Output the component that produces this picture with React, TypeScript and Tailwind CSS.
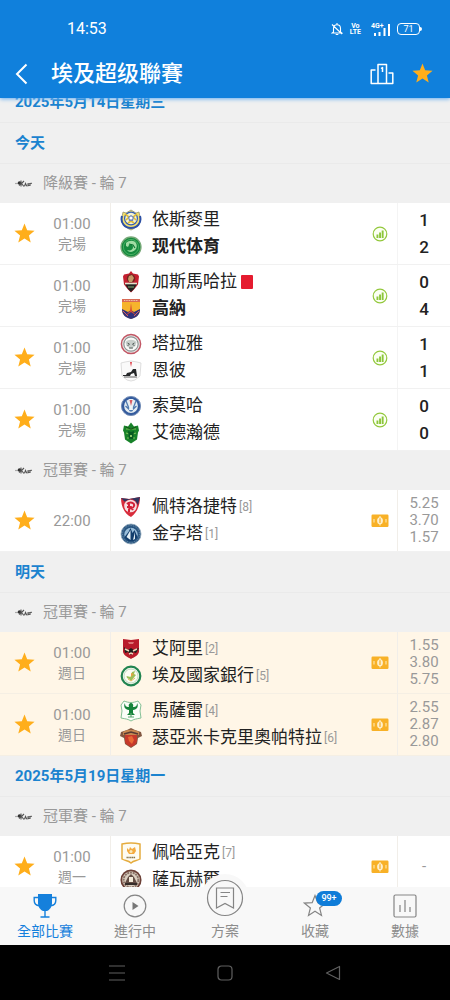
import React from "react";

type Side = { name: string; crest: React.ReactNode; bold?: boolean; rank?: number; red?: boolean };
type Match = {
  starred?: boolean;
  time: string;
  status?: string;
  home: Side;
  away: Side;
  score?: [number, number];
  odds?: string[];
  highlight?: boolean;
};
type Group = { date?: string; stage?: string; matches?: Match[] };

const STAR = "12,1.5 14.8,8.6 22.5,9.1 16.6,14 18.5,21.4 12,17.3 5.5,21.4 7.4,14 1.5,9.1 9.2,8.6";

function Crest({ children }: { children: React.ReactNode }) {
  return (
    <svg viewBox="0 0 22 22" className="size-[22px] shrink-0" aria-hidden="true">
      {children}
    </svg>
  );
}

const ismaily = (
  <Crest>
    <path d="M3 3l3 1 5-3 5 3 3-1 1 5c2 5-2 10-9 13C4 18 0 13 2 8z" fill="#f1df70" stroke="#8b8b68" strokeWidth=".7" />
    <path d="M2 7c-2 7 3 12 9 12s11-5 9-12" fill="none" stroke="#2c50a5" strokeWidth="2" />
    <circle cx="11" cy="9.5" r="6.4" fill="#f5f4d2" stroke="#345db5" strokeWidth="1.2" />
    <path d="M5 5l4 3-3 3m11-6l-4 3 3 3M8 14l3-2 3 2" fill="none" stroke="#e0bd35" strokeWidth="1.6" />
    <path d="M11 6l3 2-1 4H9L8 8z" fill="#6f86b8" />
    <circle cx="11" cy="9" r="1.6" fill="#fff" />
  </Crest>
);
const modern = (
  <Crest>
    <circle cx="11" cy="11" r="10" fill="#168a3e" stroke="#78a978" strokeWidth="1.3" />
    <circle cx="11" cy="11" r="7.6" fill="none" stroke="#4db267" strokeWidth=".9" />
    <path d="M6 7c3-3 8-3 10 0 2 4 0 8-5 9-2 0-3-1-4-2 3 1 6 0 6-3 0-2-2-3-4-2l-1 2-2-1z" fill="#a2dca4" />
    <path d="M9 8l4 1 2 3" fill="none" stroke="#0c7432" strokeWidth="1.1" />
  </Crest>
);
const gazl = (
  <Crest>
    <path d="M11 0l2 2.500 5 1 1 2-1 8-4 5-3 3-3-3-4-5-1-8 1-2 5-1z" fill="#c4202f" />
    <path d="M4.500 12h13l-3.500 6-3 3-3-3z" fill="#242321" />
    <circle cx="11" cy="7.500" r="4.200" fill="#722721" />
    <path d="M9 5l3-1 2 3-2 4H9L8 8z" fill="#c69a67" />
    <path d="M5 12.500h12" stroke="#e6e0cb" strokeWidth="1.600" />
    <path d="M8 16h6" stroke="#72976a" strokeWidth="1.200" />
  </Crest>
);
const gouna = (
  <Crest>
    <path d="M2 3h18v9c0 5-4 7-9 9-5-2-9-4-9-9z" fill="#f6b42c" />
    <path d="M2 1h18v3H2z" fill="#d96a55" />
    <path d="M4 2.500h14" stroke="#f4d8bd" strokeWidth=".9" strokeDasharray="1 .7" />
    <path d="M2 11l6 3 3-2 3 2 6-3c0 6-4 9-9 10-5-1-9-4-9-10z" fill="#30327b" />
    <path d="M11 5l1 8 5 5-6-4-6 4 5-5z" fill="#d94c32" />
    <path d="M3 13l5 5m11-5l-5 5" stroke="#d66062" strokeWidth="1" />
  </Crest>
);
const talaea = (
  <Crest>
    <circle cx="11" cy="11" r="9.600" fill="#e8e9e7" stroke="#c25765" strokeWidth="1.500" />
    <circle cx="11" cy="11" r="7.200" fill="#f9faf8" stroke="#8e9494" strokeWidth="1.200" />
    <path d="M5.500 9c3-3 8-3 11 0l-1 4-4.500 3-4.500-3z" fill="#c8cfcb" />
    <path d="M7.500 10l2 1-2 2m7-3l-2 1 2 2M9 15h4" fill="none" stroke="#58625f" strokeWidth="1" />
  </Crest>
);
const enppi = (
  <Crest>
    <path d="M1 3l4-1 6-1 6 1 4 1-1 13-5 4-4 1-4-1-5-4z" fill="#fafafa" stroke="#d5d5d5" strokeWidth=".8" />
    <path d="M10 2h2l-1 5z" fill="#e14650" />
    <path d="M3 15h3l1-2 4-1 2-3h3l1 7h-2l-1-3-3 1-1 2H3z" fill="#252729" />
    <path d="M4 17h13" stroke="#777" strokeWidth="1.200" />
  </Crest>
);
const smouha = (
  <Crest>
    <circle cx="11" cy="11" r="9.600" fill="#345b9d" stroke="#758fb8" strokeWidth="1" />
    <circle cx="11" cy="11" r="6.900" fill="#e5edf2" />
    <path d="M6 6l4 10m6-10l-4 10M5.500 11l5.500 5 5.500-5" fill="none" stroke="#517bb0" strokeWidth="1.300" />
    <path d="M9 4h4l-1 5 1 6h-4l1-6z" fill="#eef4f6" />
    <path d="M9.500 5h3L11 11z" fill="#d95b61" />
  </Crest>
);
const ittihad = (
  <Crest>
    <path d="M4 3.500l4 1 3-4 3 4 4-1 1 5-1 2-1 7-6 4-6-4-1-7-1-2z" fill="#178229" />
    <path d="M6 7h10M6 11l3 1m4 0l3-1M7 16h8" stroke="#7ac057" strokeWidth="1.200" />
    <path d="M8 9l3 1 3-1-1 8h-4z" fill="#075b22" />
    <path d="M10 13h2v2h-2z" fill="#8ac866" />
    <path d="M6 5l5 2 5-2" fill="none" stroke="#165719" strokeWidth="1.200" />
  </Crest>
);
const petrojet = (
  <Crest>
    <path d="M1 2l8 1 11-2c0 7-2 15-9 20C5 18 1 11 1 2z" fill="#d82c3b" />
    <path d="M1 2l8 1 11-2-2 8c-3-7-9-7-13-3z" fill="#30355f" />
    <circle cx="10.500" cy="10" r="6.300" fill="#f5dfe1" />
    <path d="M7 8c3-3 8-1 7 2s-4 3-6 1m1 5V7m-2 4h4l2 3" fill="none" stroke="#d31f36" strokeWidth="2" />
  </Crest>
);
const pyramids = (
  <Crest>
    <circle cx="11" cy="11" r="10" fill="#28547f" stroke="#8ba4b9" strokeWidth=".8" />
    <circle cx="11" cy="11" r="8.400" fill="none" stroke="#8aa9c1" strokeWidth=".7" strokeDasharray="1 .8" />
    <circle cx="11" cy="11.500" r="6.700" fill="#99bdd9" />
    <path d="M4.500 14l4-5 2-4 2 5 2-3 3 7c-2 6-11 6-13 0z" fill="#123e6d" />
    <path d="M10.500 7v10l-4-3zM15 9v7l-2 1z" fill="#e4eff5" />
  </Crest>
);
const ahly = (
  <Crest>
    <path d="M3 1l8 1 8-1v13c-1 4-5 5-8 7-3-2-7-3-8-7z" fill="#b91c2b" />
    <path d="M8 4h6l-1 2H9z" fill="#de7375" />
    <path d="M4 9l4 3 3-2 3 2 5-2-3 5-3-1-2 3-3-3-3 1z" fill="#1e1c1b" />
    <path d="M5 11l4 2m4 0l4-2m-8 5l2-1 2 1" fill="none" stroke="#ead8ba" strokeWidth="1.400" />
  </Crest>
);
const bank = (
  <Crest>
    <circle cx="11" cy="11" r="9.300" fill="#fbfcf3" stroke="#218450" strokeWidth="2.200" />
    <circle cx="11" cy="11" r="7" fill="none" stroke="#a5c9ac" strokeWidth=".7" />
    <path d="M6.500 11l4 1 1.500-5 3-1-1 3 2 1-5 6-2-2-2-1z" fill="#9bbf58" />
    <path d="M11 8l3 1-3 3z" fill="#e4a344" />
    <path d="M8 14l3 2 4-3" fill="none" stroke="#e1b95e" strokeWidth="1" />
  </Crest>
);
const masry = (
  <Crest>
    <path d="M4 1c5 2 9 2 14 0l3 4-1 6 1 7c-5 1-7 1-10 3-3-2-5-2-10-3l1-7-1-6z" fill="#fbfef9" stroke="#77b98b" strokeWidth=".9" />
    <path d="M5 3c-2 3 0 7 4 7v3l-2 2h8l-2-2v-3c4 0 6-4 4-7 0 3-1 4-4 4 1-3-1-4-2-4S8 4 9 7C6 7 5 6 5 3z" fill="#16833a" />
    <path d="M8 17h6m-3-4v4" stroke="#5ca571" strokeWidth="1.200" />
  </Crest>
);
const cleopatra = (
  <Crest>
    <path d="M1 5l6-2 4-2 4 2 6 2 1 4-4 2-1 6-6 4-6-4-1-6-4-2z" fill="#815641" />
    <path d="M3 5c4-3 12-3 16 0v3H3z" fill="#c68750" />
    <path d="M5 8h12v6c-1 4-4 5-6 6-3-2-6-3-6-6z" fill="#c6392b" />
    <path d="M8 10l4-1 2 4-2 4-3-3z" fill="#e96935" />
    <path d="M4 7l7-2 7 2" stroke="#563a34" fill="none" strokeWidth="1.500" />
  </Crest>
);
const pharco = (
  <Crest>
    <path d="M2 2c5-1 13-1 18 0v15c-3 2-6 1-9 4-3-3-6-2-9-4z" fill="#fefcf2" stroke="#e5ac3f" strokeWidth="1.500" />
    <path d="M7 6l2 2 1-3 2 2 3-2 1 4-2 3H9L7 9z" fill="#f4ab40" />
    <circle cx="11" cy="9.500" r="1.500" fill="#fbebbd" />
    <path d="M6.500 15.500h9" stroke="#88764c" strokeWidth="1.500" strokeDasharray="1.4 .4" />
  </Crest>
);
const zed = (
  <Crest>
    <circle cx="11" cy="11" r="9.700" fill="#dbcfc0" stroke="#6c4037" strokeWidth="1.700" />
    <circle cx="11" cy="11" r="7.400" fill="none" stroke="#8c7469" strokeWidth="2" strokeDasharray="2 .8" />
    <path d="M5 14l3-6 3-3 3 3 3 6z" fill="#634c44" />
    <path d="M9 8h4v5H9z" fill="#f2ead9" />
    <path d="M5 15h12" stroke="#352c29" strokeWidth="2" />
  </Crest>
);

const fixtures: Group[] = [
  {
    date: "今天",
    stage: "降級賽 - 輪 7",
    matches: [
      { starred: true, time: "01:00", status: "完場", home: { name: "依斯麥里", crest: ismaily }, away: { name: "现代体育", crest: modern, bold: true }, score: [1, 2] },
      { time: "01:00", status: "完場", home: { name: "加斯馬哈拉", crest: gazl, red: true }, away: { name: "高納", crest: gouna, bold: true }, score: [0, 4] },
      { starred: true, time: "01:00", status: "完場", home: { name: "塔拉雅", crest: talaea }, away: { name: "恩彼", crest: enppi }, score: [1, 1] },
      { starred: true, time: "01:00", status: "完場", home: { name: "索莫哈", crest: smouha }, away: { name: "艾德瀚德", crest: ittihad }, score: [0, 0] },
    ],
  },
  {
    stage: "冠軍賽 - 輪 7",
    matches: [
      { starred: true, time: "22:00", home: { name: "佩特洛捷特", crest: petrojet, rank: 8 }, away: { name: "金字塔", crest: pyramids, rank: 1 }, odds: ["5.25", "3.70", "1.57"] },
    ],
  },
  {
    date: "明天",
    stage: "冠軍賽 - 輪 7",
    matches: [
      { starred: true, highlight: true, time: "01:00", status: "週日", home: { name: "艾阿里", crest: ahly, rank: 2 }, away: { name: "埃及國家銀行", crest: bank, rank: 5 }, odds: ["1.55", "3.80", "5.75"] },
      { starred: true, highlight: true, time: "01:00", status: "週日", home: { name: "馬薩雷", crest: masry, rank: 4 }, away: { name: "瑟亞米卡克里奧帕特拉", crest: cleopatra, rank: 6 }, odds: ["2.55", "2.87", "2.80"] },
    ],
  },
  {
    date: "2025年5月19日星期一",
    stage: "冠軍賽 - 輪 7",
    matches: [
      { starred: true, time: "01:00", status: "週一", home: { name: "佩哈亞克", crest: pharco, rank: 7 }, away: { name: "薩瓦赫爾", crest: zed }, odds: ["-"] },
    ],
  },
];

function Star({ className }: { className: string }) {
  return (
    <svg viewBox="0 0 24 24" className={className} aria-hidden="true">
      <polygon points={STAR} fill="#ffae1b" />
    </svg>
  );
}

function LeagueMark() {
  return (
    <svg viewBox="0 0 18 10" className="h-[10px] w-[18px]" aria-hidden="true">
      <path d="M0 4.500h3" stroke="#aaa" strokeWidth="1.200" />
      <circle cx="4.500" cy="4" r="1.800" fill="#333" />
      <path d="M4 6.500l1.500-1.500M6 1.500v6M9 2L6.500 4.500 9 7.500M9.500 7.200l1-2.700 1.300 2.700M12.300 7l1.500-.5-1-1.500 1.500-.5M15 7V4.500l2-.3" fill="none" stroke="#555" strokeWidth="1.100" />
    </svg>
  );
}

function StatsMark() {
  return (
    <svg viewBox="0 0 16 16" className="size-4" aria-hidden="true">
      <circle cx="8" cy="8" r="6.800" fill="#fbfff3" stroke="#93c83d" strokeWidth="1.200" />
      <path d="M4.500 8.500h1.900V12H4.500zM7.100 6.500H9V12H7.100zM9.700 4.500h1.900V12H9.700z" fill="#8cc63a" />
    </svg>
  );
}

function OddsMark() {
  return (
    <svg viewBox="0 0 18 14" className="h-[14px] w-[18px]" aria-hidden="true">
      <rect x=".5" y=".5" width="17" height="12.500" rx="1.200" fill="#f8b127" />
      <ellipse cx="9" cy="6.800" rx="2.900" ry="3.500" fill="#fff0cc" />
      <path d="M9 2v9.500" stroke="#fff0cc" strokeWidth="1.100" />
      <path d="M9 4.300v4.800" stroke="#f2a716" strokeWidth="1.100" />
      <path d="M3 5v3.500M15 5v3.500" stroke="#ffe4a6" strokeWidth="1.200" />
    </svg>
  );
}

function Team({ side }: { side: Side }) {
  return (
    <div className="flex h-[27px] items-center">
      {side.crest}
      <span className={side.bold ? "ml-[10px] whitespace-nowrap text-[17px] font-bold text-[#222]" : "ml-[10px] whitespace-nowrap text-[17px] text-[#222]"}>{side.name}</span>
      {side.rank && <span className="ml-[2px] text-[12px] text-[#999]">[{side.rank}]</span>}
      {side.red && <span className="ml-1 h-[14px] w-3 rounded-[1px] bg-[#e51b2f]" aria-label="紅牌" />}
    </div>
  );
}

function MatchRow({ match }: { match: Match }) {
  return (
    <li className={match.highlight ? "flex h-[62px] border-b border-[#f5efe4] bg-[#fff6e7]" : "flex h-[62px] border-b border-[#f1f1f1] bg-white"}>
      <button className="flex w-12 shrink-0 items-center justify-center" aria-label="收藏比賽">
        {match.starred && <Star className="size-[23px]" />}
      </button>
      <div className="flex w-[63px] shrink-0 flex-col items-center justify-center border-r border-[#f1eee9] pr-[14px] text-[15px] leading-5 text-[#999]">
        <span>{match.time}</span>
        {match.status && <span className="text-[14px]">{match.status}</span>}
      </div>
      <div className="flex min-w-0 flex-1 flex-col justify-center pl-[9px]">
        <Team side={match.home} />
        <Team side={match.away} />
      </div>
      <div className="flex w-[35px] shrink-0 items-center justify-center">{match.score ? <StatsMark /> : <OddsMark />}</div>
      {match.score ? (
        <div className="flex w-[53px] shrink-0 flex-col items-center justify-center border-l border-[#f4f4f4] text-[17px] leading-[27px] font-medium text-[#222]">
          <span>{match.score[0]}</span>
          <span>{match.score[1]}</span>
        </div>
      ) : (
        <div className="flex w-[53px] shrink-0 flex-col items-center justify-center border-l border-[#f1eee9] text-[15px] leading-[17px] text-[#999]">
          {match.odds?.map((o) => <span key={o}>{o}</span>)}
        </div>
      )}
    </li>
  );
}

function DateHeading({ children }: { children: React.ReactNode }) {
  return <h2 className="flex h-[41px] items-center border-b border-[#eaeaea] px-[15px] text-[15px] font-bold text-[#1b83cf]">{children}</h2>;
}

function StatusBar() {
  return (
    <div className="flex h-[49px] items-center justify-between pt-[9px] pr-7 pl-[67px]">
      <span className="text-[16px]">14:53</span>
      <div className="flex items-center">
        <svg viewBox="0 0 12 14" className="mr-[7px] h-[14px] w-3" fill="none" stroke="currentColor" strokeWidth="1.100" aria-hidden="true">
          <path d="M2.500 10V6.500C2.500 4 4 2.700 6 2.700S9.500 4 9.500 6.500V10l1.200 1H1.300zM6 1v1.700M4.700 12.500h2.600M1 2.500l10 9.500" />
        </svg>
        <span className="mr-[10px] flex flex-col items-center text-[7px] leading-[6px] font-bold">
          <span>Vo</span>
          <span>LTE</span>
        </span>
        <span className="relative h-[13px] w-5">
          <span className="absolute top-0 left-0 text-[7px] leading-[7px] font-bold">4G+</span>
          <svg viewBox="0 0 20 13" className="size-full" fill="currentColor" aria-hidden="true">
            <path d="M3 10h2v3H3zM7.500 9h2v4h-2zM12.500 5h2v8h-2zM17 1h2v12h-2z" />
          </svg>
        </span>
        <span className="ml-[6px] flex h-3 w-[23px] items-center justify-center rounded-[4px] border border-white text-[9px] leading-none">71</span>
        <span className="h-1 w-[2px] rounded-r bg-white" />
      </div>
    </div>
  );
}

const tabs = [
  {
    label: "全部比賽",
    icon: (
      <svg viewBox="0 0 24 26" className="h-[26px] w-6" aria-hidden="true">
        <path d="M5 1h14v8.500c0 4.500-2 7-5 8.500h-4c-3-1.500-5-4-5-8.500z" fill="#1580dc" />
        <path d="M5.500 4.500H1.200v3c0 3 2 5 5.300 5.200M18.500 4.500h4.300v3c0 3-2 5-5.300 5.200M12 17v7M7.500 24h9" fill="none" stroke="#1580dc" strokeWidth="1.400" />
      </svg>
    ),
  },
  {
    label: "進行中",
    icon: (
      <svg viewBox="0 0 24 24" className="size-6" aria-hidden="true">
        <circle cx="12" cy="12" r="10.800" fill="none" stroke="#858585" strokeWidth="1.200" />
        <path d="M9.500 8l6 4-6 4z" fill="#777" />
      </svg>
    ),
  },
  {
    label: "方案",
    icon: (
      <svg viewBox="0 0 48 48" className="size-12" fill="none" stroke="#858585" strokeWidth="1.200" aria-hidden="true">
        <circle cx="24" cy="24" r="24" fill="#f8f8f8" stroke="none" />
        <circle cx="24" cy="24" r="17.500" />
        <path d="M15.500 14h17v20L24 29.500 15.500 34zM19.500 18.500h9.500M19.500 22.500h7" />
      </svg>
    ),
  },
  {
    label: "收藏",
    badge: "99+",
    icon: (
      <svg viewBox="0 0 24 24" className="size-6" aria-hidden="true">
        <polygon points={STAR} fill="none" stroke="#858585" strokeWidth="1.200" />
      </svg>
    ),
  },
  {
    label: "數據",
    icon: (
      <svg viewBox="0 0 24 24" className="size-6" fill="none" stroke="#858585" strokeWidth="1.200" aria-hidden="true">
        <rect x="1" y="1" width="22" height="22" rx="1.500" />
        <path d="M7 11v7M12 6v12M17 13v5" />
      </svg>
    ),
  },
];

export default function App() {
  return (
    <div lang="zh-Hant" className="flex h-screen flex-col bg-[#f0f0f0] font-[Roboto,'Noto_Sans_CJK_TC',sans-serif]">
      <header className="relative z-10 h-[98px] shrink-0 bg-[#1080dc] text-white shadow-[0_1px_4px_#66aef0]">
        <StatusBar />
        <div className="flex h-[49px] items-center pr-4 pl-[13px]">
          <button aria-label="返回" className="flex w-[38px] items-center">
            <svg viewBox="0 0 16 22" className="h-[22px] w-4" fill="none" stroke="currentColor" strokeWidth="2" aria-hidden="true">
              <path d="M13.500 1.500L4 11l9.500 9.500" />
            </svg>
          </button>
          <h1 className="flex-1 text-[22px] leading-[49px] font-medium">埃及超级聯賽</h1>
          <button aria-label="排名" className="mr-[17px]">
            <svg viewBox="0 0 24 22" className="h-[22px] w-6" fill="none" stroke="currentColor" strokeWidth="1.500" strokeLinejoin="round" aria-hidden="true">
              <path d="M8 20.500V1.500h8.500v19M5.500 7H1.200v13.500h21.600V10h-4.300M11 5.500l1.500-1V9" />
            </svg>
          </button>
          <button aria-label="收藏聯賽">
            <Star className="size-[23px]" />
          </button>
        </div>
      </header>

      <main className="min-h-0 flex-1 overflow-hidden">
        <div className="-mt-4">
          <DateHeading>2025年5月14日星期三</DateHeading>
          {fixtures.map((g, i) => (
            <section key={i}>
              {g.date && <DateHeading>{g.date}</DateHeading>}
              <h3 className="flex h-[39px] items-center gap-[10px] pl-[15px] text-[15px] text-[#999]">
                <LeagueMark />
                {g.stage}
              </h3>
              <ul>{g.matches?.map((m) => <MatchRow key={m.home.name} match={m} />)}</ul>
            </section>
          ))}
        </div>
      </main>

      <nav className="relative z-10 grid h-[58px] shrink-0 grid-cols-5 bg-[#f8f8f8]">
        {tabs.map((t, i) => (
          <button key={t.label} className={i === 0 ? "flex flex-col items-center justify-end pb-1 text-[#1580dc]" : "flex flex-col items-center justify-end pb-1 text-[#8c8c8c]"}>
            <span className="relative flex h-[30px] items-center justify-center">
              <span className={i === 2 ? "-mt-4" : ""}>{t.icon}</span>
              {t.badge && <span className="absolute top-0 left-[13px] flex h-[15px] w-[26px] items-center justify-center rounded-full bg-[#0f7cd8] text-[9px] font-medium text-white">{t.badge}</span>}
            </span>
            <span className="text-[14px] leading-5">{t.label}</span>
          </button>
        ))}
      </nav>

      <div className="flex h-[55px] shrink-0 items-center justify-center gap-[92px] bg-black text-[#606060]">
        <button aria-label="最近使用">
          <svg viewBox="0 0 16 16" className="size-4" fill="none" stroke="currentColor" strokeWidth="1.200" aria-hidden="true">
            <path d="M0 1h16M0 8h16M0 15h16" />
          </svg>
        </button>
        <button aria-label="主畫面">
          <svg viewBox="0 0 16 16" className="size-4" fill="none" stroke="currentColor" strokeWidth="1.200" aria-hidden="true">
            <rect x="1" y="1" width="14" height="14" rx="3.500" />
          </svg>
        </button>
        <button aria-label="返回上頁">
          <svg viewBox="0 0 16 16" className="size-4" fill="none" stroke="currentColor" strokeWidth="1.200" strokeLinejoin="round" aria-hidden="true">
            <path d="M14.500 1.500v13L1.500 8z" />
          </svg>
        </button>
      </div>
    </div>
  );
}
